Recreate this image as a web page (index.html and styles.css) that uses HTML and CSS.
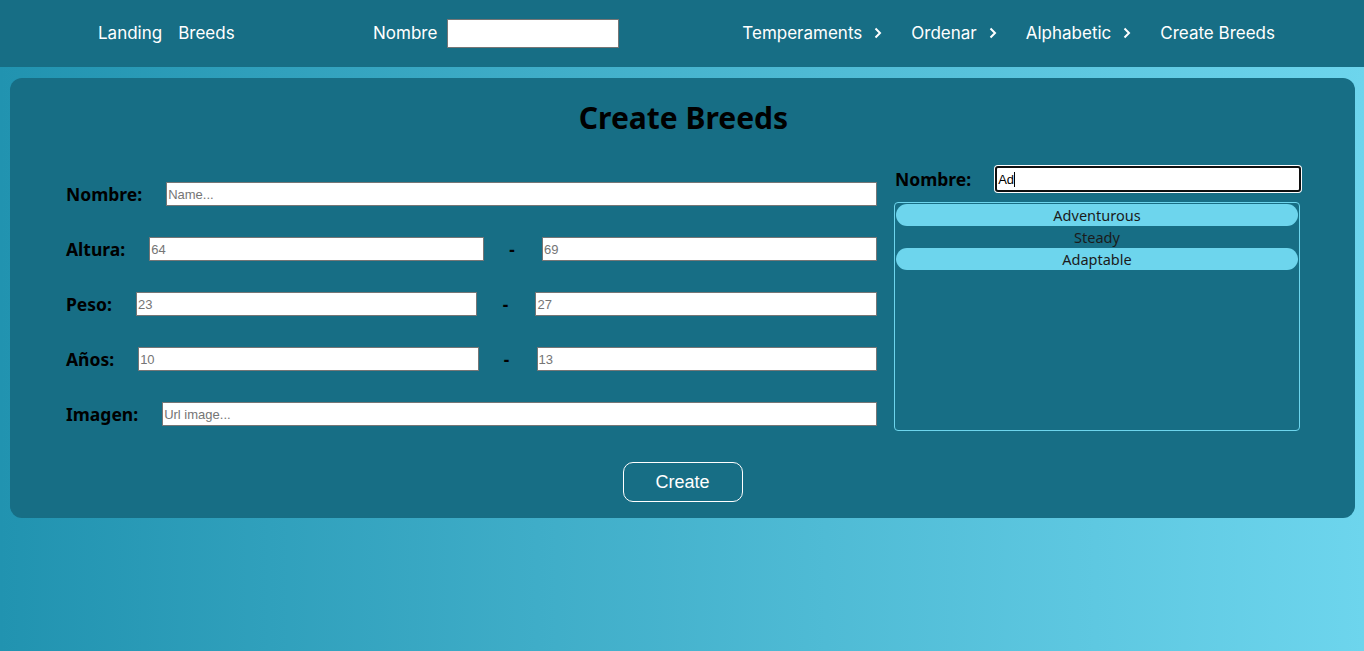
FILE: index.html
```html
<!DOCTYPE html>
<html lang="es">
<head>
<meta charset="utf-8">
<title>Create Breeds</title>
<link rel="stylesheet" href="styles.css">
</head>
<body>
<header class="nav">
  <div class="nav-left">
    <a class="nav-link">Landing</a>
    <a class="nav-link">Breeds</a>
  </div>
  <div class="nav-search">
    <span class="nav-link">Nombre</span>
    <input class="nav-input" type="text">
  </div>
  <div class="nav-right">
    <span class="nav-link dd">Temperaments <svg class="chev" viewBox="0 0 10 14" width="10" height="14"><polyline points="2.5,2.5 7,7 2.5,11.5" fill="none" stroke="#fff" stroke-width="2"/></svg></span>
    <span class="nav-link dd">Ordenar <svg class="chev" viewBox="0 0 10 14" width="10" height="14"><polyline points="2.5,2.5 7,7 2.5,11.5" fill="none" stroke="#fff" stroke-width="2"/></svg></span>
    <span class="nav-link dd">Alphabetic <svg class="chev" viewBox="0 0 10 14" width="10" height="14"><polyline points="2.5,2.5 7,7 2.5,11.5" fill="none" stroke="#fff" stroke-width="2"/></svg></span>
    <a class="nav-link">Create Breeds</a>
  </div>
</header>

<main class="card">
  <h1 class="title">Create Breeds</h1>
  <div class="cols">
    <div class="form-left">
      <div class="row">
        <label class="lbl">Nombre:</label>
        <input class="fld" type="text" placeholder="Name...">
      </div>
      <div class="row">
        <label class="lbl">Altura:</label>
        <input class="fld" type="text" placeholder="64">
        <span class="dash">-</span>
        <input class="fld" type="text" placeholder="69">
      </div>
      <div class="row">
        <label class="lbl">Peso:</label>
        <input class="fld" type="text" placeholder="23">
        <span class="dash">-</span>
        <input class="fld" type="text" placeholder="27">
      </div>
      <div class="row">
        <label class="lbl">Años:</label>
        <input class="fld" type="text" placeholder="10">
        <span class="dash">-</span>
        <input class="fld" type="text" placeholder="13">
      </div>
      <div class="row">
        <label class="lbl">Imagen:</label>
        <input class="fld" type="text" placeholder="Url image...">
      </div>
    </div>
    <div class="form-right">
      <div class="row-r">
        <label class="lbl">Nombre:</label>
        <div class="focus-input">Ad<span class="caret"></span></div>
      </div>
      <div class="temps">
        <div class="temp on">Adventurous</div>
        <div class="temp">Steady</div>
        <div class="temp on">Adaptable</div>
      </div>
    </div>
  </div>
  <div class="actions">
    <button class="btn">Create</button>
  </div>
</main>
</body>
</html>
```

FILE: styles.css
```css
* { box-sizing: border-box; }

body {
  margin: 0;
  min-height: 651px;
  background: linear-gradient(to right, #2193b0, #6dd5ed);
  font-family: "Noto Sans", "Open Sans", sans-serif;
}

.nav {
  height: 67px;
  background: #176e85;
  display: flex;
  align-items: center;
  padding-left: 98px;
  padding-bottom: 1px;
}

.nav-link {
  color: #fff;
  font-family: "Inter", "Lato", sans-serif;
  font-size: 17px;
  text-decoration: none;
  white-space: nowrap;
}

.nav-left {
  display: flex;
  gap: 16px;
  width: 134px;
}

.nav-search {
  display: flex;
  align-items: center;
  gap: 10px;
  margin-left: 141px;
}

.nav-input {
  width: 172px;
  height: 29px;
  border: 1px solid #767676;
  background: #fff;
  margin: 0;
  padding: 0;
}

.nav-right {
  display: flex;
  align-items: center;
  margin-left: 123px;
  gap: 28px;
}

.dd {
  display: inline-flex;
  align-items: center;
  gap: 11px;
}

.chev { display: block; }

.card {
  margin: 11px 9px 0 10px;
  height: 440px;
  background: #176e85;
  border-radius: 12px;
  padding: 20px 54px 0 56px;
}

.title {
  margin: 0;
  text-align: center;
  font-size: 30px;
  line-height: 40px;
  font-weight: 700;
  color: #000;
}

.cols {
  display: flex;
  gap: 17px;
  margin-top: 28px;
}

.form-left {
  width: 811px;
  padding-top: 16px;
  display: flex;
  flex-direction: column;
  gap: 31px;
}

.row {
  display: flex;
  align-items: center;
  height: 24px;
}

.lbl {
  font-weight: 700;
  font-size: 17.5px;
  color: #000;
  margin-right: 24px;
  white-space: nowrap;
}

.fld {
  flex: 1;
  min-width: 0;
  height: 24px;
  margin: 0;
  border: 1px solid #767676;
  background: #fff;
  padding: 1px 1px;
  font-family: "Liberation Sans", Arial, sans-serif;
  font-size: 13px;
}

.fld::placeholder { color: #757575; }

.dash {
  width: 6px;
  margin: 0 27px 0 25px;
  font-weight: 700;
  font-size: 17px;
  color: #000;
  text-align: center;
}

.form-right {
  width: 407px;
}

.row-r {
  display: flex;
  align-items: center;
  height: 26px;
  padding-left: 1px;
}

.focus-input {
  flex: 1;
  height: 26px;
  border: 2px solid #101010;
  border-radius: 3px;
  box-shadow: 0 0 0 1px #fff;
  background: #fff;
  font-family: "Liberation Sans", Arial, sans-serif;
  font-size: 13px;
  color: #000;
  display: flex;
  align-items: center;
  padding-left: 1px;
}

.caret {
  display: inline-block;
  width: 1px;
  height: 15px;
  background: #000;
}

.temps {
  margin-top: 10px;
  height: 229px;
  border: 1px solid #6dd5ed;
  border-radius: 4px;
  padding: 1px;
  width: 406px;
}

.temp {
  height: 22px;
  line-height: 22px;
  text-align: center;
  font-size: 14.5px;
  color: #1b1b1b;
  border-radius: 11px;
}

.temp.on { background: #6dd5ed; }

.actions {
  display: flex;
  justify-content: center;
  margin-top: 31px;
  margin-right: 2px;
}

.btn {
  width: 120px;
  height: 40px;
  border: 1px solid #fff;
  border-radius: 10px;
  background: transparent;
  color: #fff;
  font-family: "Liberation Sans", Arial, sans-serif;
  font-size: 18px;
}
```
